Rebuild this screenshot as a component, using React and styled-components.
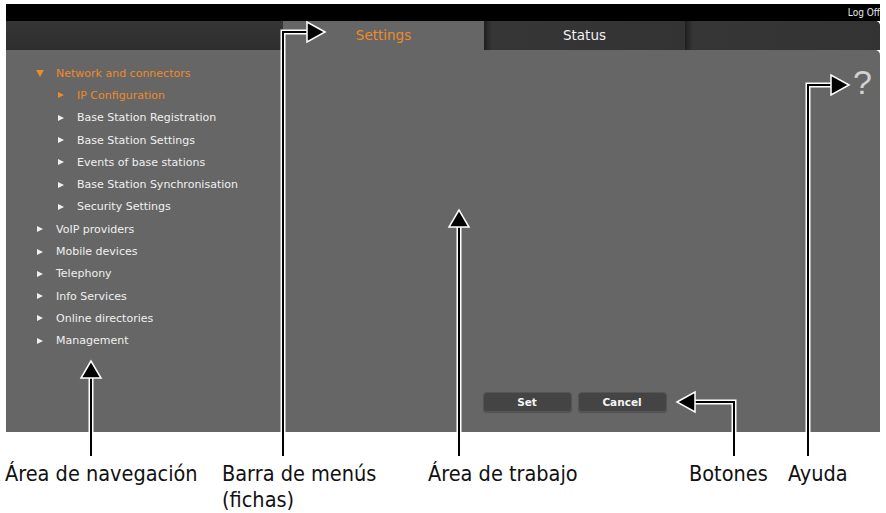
import React from 'react';
import styled, { createGlobalStyle } from 'styled-components';

const GlobalStyle = createGlobalStyle`
    html, body {
        margin: 0;
        padding: 0;
        background: #ffffff;
    }
    body {
        width: 886px;
        height: 513px;
        overflow: hidden;
    }
`

const menu = [
    { label: 'Network and connectors', open: true, active: true, children: [
        { label: 'IP Configuration', active: true },
        { label: 'Base Station Registration' },
        { label: 'Base Station Settings' },
        { label: 'Events of base stations' },
        { label: 'Base Station Synchronisation' },
        { label: 'Security Settings' },
    ]},
    { label: 'VoIP providers' },
    { label: 'Mobile devices' },
    { label: 'Telephony' },
    { label: 'Info Services' },
    { label: 'Online directories' },
    { label: 'Management' },
]

const captions = [
    { text: 'Área de navegación', left: 5 },
    { text: 'Barra de menús', sub: '(fichas)', left: 222 },
    { text: 'Área de trabajo', left: 428 },
    { text: 'Botones', left: 689 },
    { text: 'Ayuda', left: 788 },
]

// arrows: polyline points, head = tip + direction
const arrows = [
    { points: '91,456 91,376', tip: [91, 361], dir: 'up' },
    { points: '283,456 283,32 308,32', tip: [325, 32], dir: 'right' },
    { points: '459,456 459,226', tip: [459, 210], dir: 'up' },
    { points: '734,456 734,402 694,402', tip: [677, 402], dir: 'left' },
    { points: '808,456 808,85 832,85', tip: [849, 85], dir: 'right' },
]

const headPoints = ([x, y], dir) => {
    if (dir === 'up') return `${x},${y} ${x - 10},${y + 17} ${x + 10},${y + 17}`
    if (dir === 'right') return `${x},${y} ${x - 18},${y - 10} ${x - 18},${y + 10}`
    return `${x},${y} ${x + 18},${y - 10} ${x + 18},${y + 10}`
}

const App = () => {
    return (
        <Page>
            <GlobalStyle />
            <Screen>
                <TopBar>
                    <LogOff>Log Off</LogOff>
                </TopBar>
                <TabRow>
                    <TabSpacer />
                    <Tab active>Settings</Tab>
                    <Tab>Status</Tab>
                    <Tab filler />
                </TabRow>
                <Main>
                    <Nav>
                        {menu.map((item) => (
                            <React.Fragment key={item.label}>
                                <NavItem active={item.active}>
                                    <Arrow open={item.open} active={item.active} />
                                    {item.label}
                                </NavItem>
                                {item.children && item.children.map((child) => (
                                    <NavItem sub key={child.label} active={child.active}>
                                        <Arrow active={child.active} />
                                        {child.label}
                                    </NavItem>
                                ))}
                            </React.Fragment>
                        ))}
                    </Nav>
                    <WorkArea>
                        <Help>?</Help>
                        <ButtonRow>
                            <Button>Set</Button>
                            <Button>Cancel</Button>
                        </ButtonRow>
                    </WorkArea>
                </Main>
            </Screen>

            <Captions>
                {captions.map((c) => (
                    <Caption key={c.text} left={c.left}>
                        {c.text}
                        {c.sub && <><br />{c.sub}</>}
                    </Caption>
                ))}
            </Captions>

            <Overlay width="886" height="513" viewBox="0 0 886 513">
                {arrows.map((a, i) => (
                    <g key={i}>
                        <polyline points={a.points} fill="none" stroke="#fff" strokeWidth="5" strokeLinejoin="miter" />
                        <polyline points={a.points} fill="none" stroke="#000" strokeWidth="2" strokeLinejoin="miter" />
                        <polygon points={headPoints(a.tip, a.dir)} fill="#000" stroke="#fff" strokeWidth="1.5" strokeLinejoin="miter" />
                    </g>
                ))}
            </Overlay>
        </Page>
    );
}

const Page = styled.div`
    position: relative;
    width: 886px;
    height: 513px;
    padding-top: 4px;
    box-sizing: border-box;
    background: #fff;
    overflow: hidden;
`

const Screen = styled.div`
    margin-left: 6px;
    width: 874px;
    display: flex;
    flex-direction: column;
`

const TopBar = styled.div`
    height: 17px;
    background: #000;
    display: flex;
    justify-content: flex-end;
    align-items: center;
`

const LogOff = styled.span`
    color: #e8e8e8;
    font-family: "DejaVu Sans Condensed", "DejaVu Sans", sans-serif;
    font-size: 10px;
    line-height: 17px;
`

const TabRow = styled.div`
    height: 29px;
    display: grid;
    grid-template-columns: 277px 201px 201px 1fr;
    background: #333;
    border-top-right-radius: 5px;
    overflow: hidden;
`

const TabSpacer = styled.div`
    background: linear-gradient(#353535, #2e2e2e);
`

const Tab = styled.div`
    display: flex;
    align-items: center;
    justify-content: center;
    font-family: "DejaVu Sans", sans-serif;
    font-size: 13.5px;
    color: ${p => p.active ? '#ee8a28' : '#f2f2f2'};
    background: ${p => p.active ? '#666' : 'linear-gradient(90deg, #1e1e1e 0px, #2b2b2b 4px, #363636 8px, #333 100%)'};
    padding-bottom: 2px;
`

const Main = styled.div`
    height: 382px;
    background: #666;
    display: grid;
    grid-template-columns: 277px 1fr;
    border-top-right-radius: 5px;
`

const Nav = styled.div`
    padding-top: 12px;
    display: flex;
    flex-direction: column;
`

const NavItem = styled.div`
    height: 22.3px;
    display: flex;
    align-items: center;
    padding-left: ${p => p.sub ? 51 : 30}px;
    font-family: "DejaVu Sans", sans-serif;
    font-size: 11px;
    color: ${p => p.active ? '#ee8a28' : '#f0f0f0'};
`

const Arrow = styled.span`
    width: 0;
    height: 0;
    margin-right: ${p => p.open ? 12 : 13}px;
    margin-left: ${p => p.open ? 0 : 1}px;
    border-style: solid;
    border-color: transparent;
    ${p => p.open
        ? `border-width: 7px 4px 0 4px; border-top-color: ${p.active ? '#ee8a28' : '#f0f0f0'};`
        : `border-width: 3.5px 0 3.5px 6px; border-left-color: ${p.active ? '#ee8a28' : '#f0f0f0'};`}
`

const WorkArea = styled.div`
    display: flex;
    flex-direction: column;
    justify-content: space-between;
    padding: 13px 8px 20px 0;
`

const Help = styled.div`
    align-self: flex-end;
    font-family: "Liberation Sans", sans-serif;
    font-size: 34px;
    line-height: 38px;
    color: #d2d2d2;
`

const ButtonRow = styled.div`
    display: flex;
    justify-content: center;
    gap: 6px;
    padding-right: 6px;
`

const Button = styled.button`
    width: 89px;
    height: 20px;
    background: #444;
    border: 1px solid #555;
    border-radius: 4px;
    color: #f4f4f4;
    font-family: "DejaVu Sans", sans-serif;
    font-weight: bold;
    font-size: 10.5px;
    padding: 0;
    box-shadow: 0 1px 1px #505050;
`

const Captions = styled.div`
    position: relative;
    height: 52px;
    margin-top: 29px;
`

const Caption = styled.div`
    position: absolute;
    left: ${p => p.left}px;
    top: 0;
    font-family: "Liberation Sans Narrow", "DejaVu Sans Condensed", sans-serif;
    font-size: 21.5px;
    line-height: 26px;
    color: #111;
    white-space: nowrap;
`

const Overlay = styled.svg`
    position: absolute;
    left: 0;
    top: 0;
    pointer-events: none;
`

export default App;
